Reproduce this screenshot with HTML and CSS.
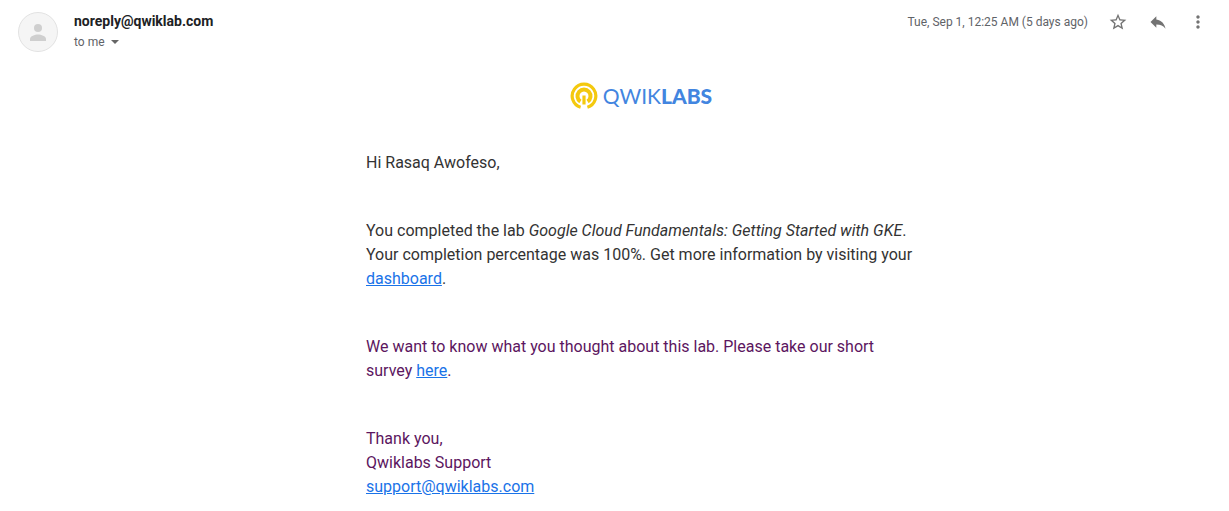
FILE: index.html
```html
<!DOCTYPE html>
<html lang="en">
<head>
<meta charset="utf-8">
<meta name="viewport" content="width=device-width, initial-scale=1">
<title>Qwiklabs message</title>
<link rel="stylesheet" href="styles.css">
</head>
<body>
<article class="mail">
  <header class="mail-header">
    <svg class="avatar" viewBox="0 0 40 40" aria-hidden="true">
      <circle cx="20" cy="20" r="19.5" fill="#f5f5f5" stroke="#e2e2e2"/>
      <circle cx="20" cy="16" r="4" fill="#cfcfcf"/>
      <path d="M12 29v-2c0-3 5-4.500 8-4.500s8 1.500 8 4.500v2z" fill="#cfcfcf"/>
    </svg>
    <div class="sender">
      <h1 class="sender-name">noreply@qwiklab.com</h1>
      <button class="recipient" type="button">to me
        <svg class="caret" viewBox="0 0 8 4" aria-hidden="true"><path d="M0 0h8L4 4z"/></svg>
      </button>
    </div>
    <time class="date">Tue, Sep 1, 12:25 AM (5 days ago)</time>
    <div class="actions">
      <button class="icon-button" type="button" aria-label="Star">
        <svg class="icon" viewBox="0 0 24 24"><path d="M22 9.240l-7.190-.62L12 2 9.190 8.630 2 9.240l5.460 4.730L5.820 21 12 17.270 18.180 21l-1.630-7.030L22 9.240zM12 15.400l-3.760 2.270 1-4.280-3.320-2.880 4.380-.38L12 6.100l1.710 4.040 4.380.38-3.320 2.880 1 4.280L12 15.400z"/></svg>
      </button>
      <button class="icon-button" type="button" aria-label="Reply">
        <svg class="icon" viewBox="0 0 24 24"><path d="M10 9V5l-7 7 7 7v-4.100c5 0 8.500 1.600 11 5.100-1-5-4-10-11-11z"/></svg>
      </button>
      <button class="icon-button" type="button" aria-label="More">
        <svg class="icon" viewBox="0 0 24 24"><path d="M12 8c1.100 0 2-.9 2-2s-.9-2-2-2-2 .9-2 2 .9 2 2 2zm0 2c-1.100 0-2 .9-2 2s.9 2 2 2 2-.9 2-2-.9-2-2-2zm0 6c-1.100 0-2 .9-2 2s.9 2 2 2 2-.9 2-2-.9-2-2-2z"/></svg>
      </button>
    </div>
  </header>
  <div class="message">
    <div class="logo">
      <svg class="logo-mark" viewBox="0 0 28 28" aria-hidden="true">
        <g fill="none" stroke="#f4c90e">
          <path d="M10.600 25.300A11.800 11.800 0 1 1 17.400 25.300" stroke-width="3.200"/>
          <path d="M10.400 19.500A6.500 6.500 0 1 1 17.600 19.500" stroke-width="4"/>
        </g>
        <path d="M12.400 13.500h3.200v9h-3.200z" fill="#f4c90e"/>
      </svg>
      <span class="logo-text">QWIK<b class="logo-bold">LABS</b></span>
    </div>
    <p class="paragraph">Hi Rasaq Awofeso,</p>
    <p class="paragraph">You completed the lab <em>Google Cloud Fundamentals: Getting Started with GKE</em>. Your completion percentage was 100%. Get more information by visiting your <a class="link" href="#dashboard">dashboard</a>.</p>
    <p class="paragraph quoted">We want to know what you thought about this lab. Please take our short survey <a class="link" href="#survey">here</a>.</p>
    <p class="paragraph quoted">Thank you,<br>Qwiklabs Support<br><a class="link" href="mailto:support@qwiklabs.com">support@qwiklabs.com</a></p>
  </div>
</article>
</body>
</html>
```
FILE: styles.css
```css
* {
  box-sizing: border-box;
}

body {
  margin: 0;
  background: #fff;
  color: #333;
  font-family: Roboto, "Liberation Sans", sans-serif;
}

button {
  padding: 0;
  border: 0;
  background: none;
  color: inherit;
  font: inherit;
  cursor: pointer;
}

.mail {
  display: grid;
  grid-template-columns: 40px 1fr;
  column-gap: 16px;
  row-gap: 28px;
  padding: 12px 21px 12px 18px;
}

.mail-header {
  grid-column: 1 / -1;
  display: flex;
  align-items: flex-start;
}

.avatar {
  width: 40px;
  height: 40px;
  margin-right: 16px;
}

.sender {
  flex: 1;
}

.sender-name {
  margin: 0;
  color: #202124;
  font-size: 14px;
  font-weight: 700;
  line-height: 18px;
}

.recipient {
  display: flex;
  align-items: center;
  gap: 6px;
  color: #5f6368;
  font-size: 12px;
  line-height: 24px;
}

.caret {
  width: 8px;
  height: 4px;
  fill: #666;
}

.date {
  color: #5f6368;
  font-size: 12px;
  line-height: 20px;
}

.actions {
  display: flex;
  gap: 20px;
  margin-left: 20px;
}

.icon-button {
  display: flex;
  width: 20px;
  height: 20px;
}

.icon {
  width: 20px;
  height: 20px;
  fill: #737373;
}

.message {
  grid-column: 2;
  justify-self: center;
  max-width: 550px;
}

.logo {
  display: flex;
  align-items: center;
  justify-content: center;
  gap: 5px;
  height: 28px;
  margin-bottom: 41px;
}

.logo-mark {
  width: 28px;
  height: 28px;
}

.logo-text {
  color: #4285e0;
  font-family: Lato, sans-serif;
  font-size: 21px;
  font-weight: 400;
  line-height: 28px;
}

.logo-bold {
  font-weight: 900;
}

.paragraph {
  margin: 0 0 44px;
  font-size: 16px;
  line-height: 24px;
}

.paragraph:last-child {
  margin-bottom: 0;
}

.quoted {
  color: #5c1660;
}

.link {
  color: #1a73e8;
}
```
